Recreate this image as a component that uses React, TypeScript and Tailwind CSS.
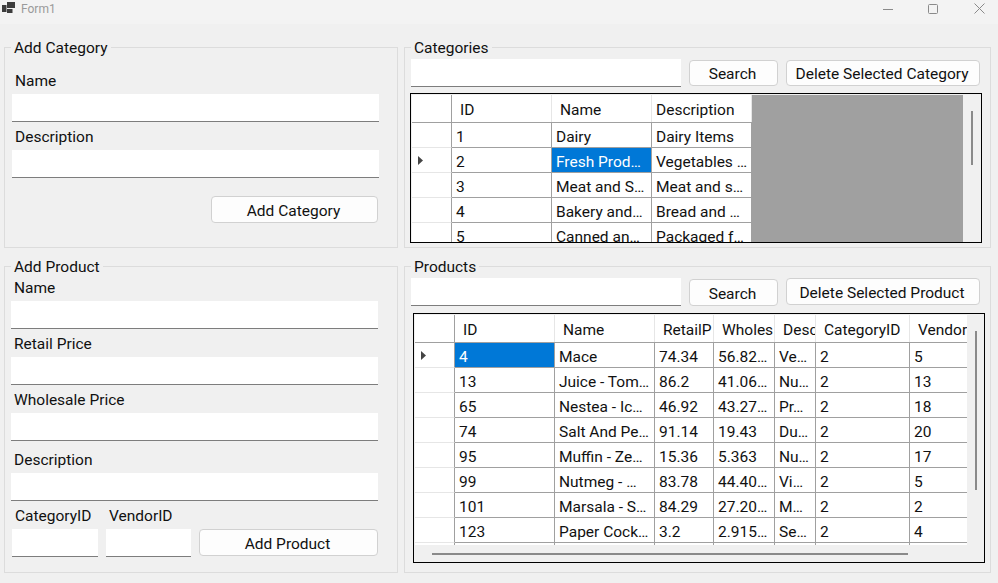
import type { ReactNode } from 'react';

const font = "font-['Roboto','Liberation_Sans',sans-serif]";

type GridProps = {
  widths: string[];
  headers: string[];
  headerPads: string[];
  rows: string[][];
  selected: [number, number];
  tableWidth: string;
};

function TextBox({ className }: { className: string }) {
  return <input type="text" className={`block h-[28px] bg-white border-b border-[#7d7d7d] outline-none ${className}`} />;
}

function Btn({ className, compact, children }: { className: string; compact?: boolean; children: ReactNode }) {
  return (
    <button className={`block rounded-[4px] border border-[#d1d1d1] bg-[#fdfdfd] pr-[2px] text-[15.5px] text-[#111] leading-none ${compact ? 'h-[26px] pt-[3px]' : 'h-[27px] pt-[4px]'} ${className}`}>
      {children}
    </button>
  );
}

function Group({ title, className, children }: { title: string; className?: string; children: ReactNode }) {
  return (
    <fieldset className={`border border-[#dcdcdc] min-w-0 ${className ?? ''}`}>
      <legend className="ml-[6px] h-[20px] px-[3px] text-[15.5px] leading-[22px] text-[#111]">{title}</legend>
      {children}
    </fieldset>
  );
}

function Field({ label, className }: { label: string; className: string }) {
  return <label className={`block h-[20px] text-[15.5px] leading-[20px] text-[#111] ${className}`}>{label}</label>;
}

function Table({ widths, headers, headerPads, rows, selected, tableWidth }: GridProps) {
  return (
    <div className={`${tableWidth} shrink-0 overflow-hidden`}>
      <div className="flex h-[28px] bg-white border-b border-[#a0a0a0]">
        <div className="w-[40px] shrink-0 border-r border-[#a0a0a0]" />
        {headers.map((h, i) => (
          <div
            key={h}
            className={`${widths[i]} ${headerPads[i]} shrink-0 overflow-hidden whitespace-nowrap border-r border-[#e6e6e6] text-[15.5px] leading-[31px] text-[#111]`}
          >
            {h}
          </div>
        ))}
      </div>
      {rows.map((row, r) => (
        <div key={r} className="flex h-[25px] bg-white">
          <div className="relative flex w-[40px] shrink-0 items-center border-r border-b border-r-[#a0a0a0] border-b-[#e6e6e6] pl-[6px]">
            {r === selected[0] && (
              <svg width="5" height="9" viewBox="0 0 5 9">
                <polygon points="0,0 5,4.5 0,9" fill="#444" />
              </svg>
            )}
          </div>
          {row.map((cell, c) => {
            const active = r === selected[0] && c === selected[1];
            return (
              <div
                key={c}
                className={`${widths[c]} shrink-0 overflow-hidden whitespace-nowrap border-r border-b border-[#a0a0a0] pl-[4px] text-[15.5px] leading-[28px] ${active ? 'bg-[#0078d7] text-white' : 'text-[#111]'}`}
              >
                {cell}
              </div>
            );
          })}
        </div>
      ))}
    </div>
  );
}

const categoryRows = [
  ['1', 'Dairy', 'Dairy Items'],
  ['2', 'Fresh Prod…', 'Vegetables …'],
  ['3', 'Meat and S…', 'Meat and s…'],
  ['4', 'Bakery and…', 'Bread and …'],
  ['5', 'Canned an…', 'Packaged f…'],
];

const productRows = [
  ['4', 'Mace', '74.34', '56.82…', 'Ve…', '2', '5'],
  ['13', 'Juice - Tom…', '86.2', '41.06…', 'Nu…', '2', '13'],
  ['65', 'Nestea - Ic…', '46.92', '43.27…', 'Pr…', '2', '18'],
  ['74', 'Salt And Pe…', '91.14', '19.43', 'Du…', '2', '20'],
  ['95', 'Muffin - Ze…', '15.36', '5.363', 'Nu…', '2', '17'],
  ['99', 'Nutmeg - …', '83.78', '44.40…', 'Vi…', '2', '5'],
  ['101', 'Marsala - S…', '84.29', '27.20…', 'M…', '2', '2'],
  ['123', 'Paper Cock…', '3.2', '2.915…', 'Se…', '2', '4'],
  ['', '', '', '', '', '', ''],
];

export default function App() {
  return (
    <div className={`${font} h-[583px] w-[998px] overflow-hidden bg-[#f0f0f0]`}>
      {/* title bar */}
      <div className="flex h-[24px] items-start bg-[#f3f3f3] pl-[2px] pt-[2px]">
        <svg width="13" height="13" viewBox="0 0 13 13">
          <rect x="0" y="3" width="4.5" height="7" fill="#3d3d3d" />
          <rect x="5" y="0" width="8" height="6" fill="#3d3d3d" />
          <rect x="5" y="7" width="5.5" height="4" fill="#3d3d3d" />
        </svg>
        <span className="ml-[6px] text-[12px] leading-[14px] text-[#9a9a9a]">Form1</span>
        <div className="ml-auto flex items-center pt-[1px]">
          <svg width="10" height="10" viewBox="0 0 10 10" className="mr-[35px]">
            <line x1="0" y1="5.5" x2="10" y2="5.5" stroke="#8a8a8a" />
          </svg>
          <svg width="10" height="10" viewBox="0 0 10 10" className="mr-[36px]">
            <rect x="0.5" y="0.5" width="9" height="9" rx="1" fill="none" stroke="#8a8a8a" />
          </svg>
          <svg width="11" height="11" viewBox="0 0 11 11" className="mr-[13px]">
            <path d="M0.5 0.5 L10.5 10.5 M10.5 0.5 L0.5 10.5" stroke="#8a8a8a" fill="none" />
          </svg>
        </div>
      </div>

      <div className="grid grid-cols-[394px_587px] grid-rows-[211px_317px] gap-x-[6px] gap-y-[8px] pl-[4px] pt-[13px]">
        <Group title="Add Category">
          <Field label="Name" className="ml-[10px] mt-[13px] pt-[1px]" />
          <TextBox className="ml-[7px] mt-[4px] w-[367px]" />
          <Field label="Description" className="ml-[10px] mt-[5px]" />
          <TextBox className="ml-[7px] mt-[3px] w-[367px]" />
          <Btn className="ml-[206px] mt-[18px] w-[167px]">Add Category</Btn>
        </Group>

        <Group title="Categories">
          <div className="ml-[6px] mt-[2px] flex items-start">
            <TextBox className="w-[270px]" />
            <Btn compact className="ml-[8px] mt-[1px] w-[89px]">Search</Btn>
            <Btn compact className="ml-[8px] mt-[1px] w-[194px]">Delete Selected Category</Btn>
          </div>
          <div className="ml-[5px] mt-[6px] flex h-[150px] w-[572px] border border-black bg-[#f0f0f0] pt-[1px] pl-[1px] overflow-hidden">
            <div className="flex w-[551px] shrink-0 bg-[#a0a0a0] overflow-hidden">
              <Table
                tableWidth="w-[340px]"
                widths={['w-[100px]', 'w-[100px]', 'w-[100px]']}
                headers={['ID', 'Name', 'Description']}
                headerPads={['pl-[8px]', 'pl-[8px]', 'pl-[4px]']}
                rows={categoryRows}
                selected={[1, 1]}
              />
            </div>
            <div className="flex-1 pl-[8px] pt-[16px]">
              <div className="h-[54px] w-[2px] bg-[#8a8a8a]" />
            </div>
          </div>
        </Group>

        <Group title="Add Product">
          <Field label="Name" className="ml-[9px] mt-[2px]" />
          <TextBox className="ml-[6px] mt-[3px] w-[367px]" />
          <Field label="Retail Price" className="ml-[9px] mt-[5px]" />
          <TextBox className="ml-[6px] mt-[3px] w-[367px]" />
          <Field label="Wholesale Price" className="ml-[9px] mt-[5px]" />
          <TextBox className="ml-[6px] mt-[3px] w-[367px]" />
          <Field label="Description" className="ml-[9px] mt-[9px]" />
          <TextBox className="ml-[6px] mt-[3px] w-[367px]" />
          <div className="mt-[5px] flex">
            <div className="ml-[7px] w-[94px]">
              <Field label="CategoryID" className="ml-[3px]" />
              <TextBox className="mt-[3px] w-[86px]" />
            </div>
            <div className="w-[93px]">
              <Field label="VendorID" className="ml-[3px]" />
              <TextBox className="mt-[3px] w-[85px]" />
            </div>
            <Btn className="mt-[23px] w-[179px]">Add Product</Btn>
          </div>
        </Group>

        <Group title="Products">
          <div className="ml-[6px] mt-[2px] flex items-start">
            <TextBox className="w-[270px]" />
            <Btn className="ml-[8px] mt-[1px] w-[89px]">Search</Btn>
            <Btn className="ml-[8px] w-[194px]">Delete Selected Product</Btn>
          </div>
          <div className="ml-[8px] mt-[7px] flex h-[250px] w-[572px] flex-col border border-black bg-[#f0f0f0] pt-[1px] pl-[1px] overflow-hidden">
            <div className="flex h-[230px] shrink-0">
              <div className="h-[230px] w-[552px] shrink-0 overflow-hidden">
                <Table
                  tableWidth="w-[552px]"
                  widths={['w-[100px]', 'w-[100px]', 'w-[59px]', 'w-[61px]', 'w-[41px]', 'w-[94px]', 'w-[60px]']}
                  headers={['ID', 'Name', 'RetailP', 'Wholes', 'Desc', 'CategoryID', 'Vendor']}
                  headerPads={['pl-[8px]', 'pl-[8px]', 'pl-[8px]', 'pl-[8px]', 'pl-[8px]', 'pl-[8px]', 'pl-[8px]']}
                  rows={productRows}
                  selected={[0, 0]}
                />
              </div>
              <div className="flex-1 pl-[8px] pt-[16px]">
                <div className="h-[159px] w-[2px] bg-[#8a8a8a]" />
              </div>
            </div>
            <div className="pl-[17px] pt-[8px]">
              <div className="h-[2px] w-[476px] bg-[#8a8a8a]" />
            </div>
          </div>
        </Group>
      </div>
    </div>
  );
}
